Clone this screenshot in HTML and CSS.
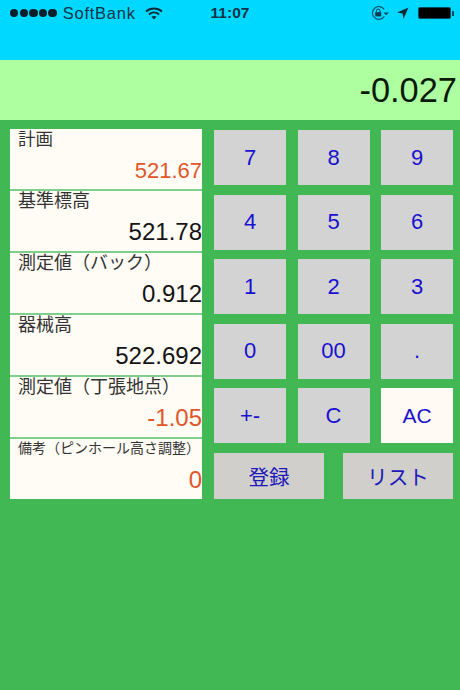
FILE: index.html
```html
<!DOCTYPE html>
<html lang="ja">
<head>
<meta charset="utf-8">
<title>Calculator</title>
<link rel="stylesheet" href="styles.css">
</head>
<body>
<header class="top">
  <div class="status">
    <div class="status-left">
      <span class="dots"><i></i><i></i><i></i><i></i><i></i></span>
      <span class="carrier">SoftBank</span>
      <svg class="wifi" width="18" height="13" viewBox="0 0 18 13"><path d="M1 4.6C5.6.6 12.4.6 17 4.6" fill="none" stroke="#0a2a3a" stroke-width="2"/><path d="M3.9 7.4c3-2.5 7.2-2.5 10.2 0" fill="none" stroke="#0a2a3a" stroke-width="2"/><path d="M9 12.6 6.4 9.8c1.5-1.1 3.7-1.1 5.2 0z" fill="#0a2a3a"/></svg>
    </div>
    <span class="time">11:07</span>
    <div class="status-right">
      <svg width="18" height="14" viewBox="0 0 18 14"><path d="M13.4 10.2A6.4 6.4 0 1 1 13.2 3.4" fill="none" stroke="#0a4a60" stroke-width="1.1"/><path d="M12.4 6.4H18l-2.8 2.8z" fill="#0a4a60"/><rect x="4.2" y="6.2" width="6" height="4.2" fill="#0a3a50"/><path d="M5.4 6.2V4.9a1.8 1.8 0 0 1 3.6 0v1.3" fill="none" stroke="#0a3a50"/></svg>
      <svg class="arrow" width="12" height="12" viewBox="0 0 12 12"><path d="M11.5.5 0 5.5l5.6.9.9 5.6z" fill="#0a2a3a"/></svg>
      <span class="battery"><span class="fill"></span></span>
    </div>
  </div>
</header>
<div class="display">-0.027</div>
<main class="main">
  <section class="fields">
    <div class="field"><div class="label l1">計画</div><div class="value alert first">521.67</div></div>
    <div class="field"><div class="label">基準標高</div><div class="value">521.78</div></div>
    <div class="field"><div class="label">測定値（バック）</div><div class="value">0.912</div></div>
    <div class="field"><div class="label">器械高</div><div class="value">522.692</div></div>
    <div class="field"><div class="label">測定値（丁張地点）</div><div class="value alert">-1.05</div></div>
    <div class="field"><div class="label small">備考（ピンホール高さ調整）</div><div class="value alert">0</div></div>
  </section>
  <section class="pad">
    <div class="keys">
      <div class="key">7</div><div class="key">8</div><div class="key">9</div>
      <div class="key">4</div><div class="key">5</div><div class="key">6</div>
      <div class="key">1</div><div class="key">2</div><div class="key">3</div>
      <div class="key">0</div><div class="key">00</div><div class="key">.</div>
      <div class="key">+-</div><div class="key">C</div><div class="key on">AC</div>
    </div>
    <div class="actions">
      <div class="key wide">登録</div>
      <div class="key wide">リスト</div>
    </div>
  </section>
</main>
</body>
</html>
```
FILE: styles.css
```css
html, body {
  margin: 0;
  height: 100%;
}
body {
  width: 460px;
  height: 690px;
  overflow: hidden;
  background: #41b853;
  font-family: "Liberation Sans", "Noto Sans CJK JP", sans-serif;
  display: flex;
  flex-direction: column;
}
.top {
  height: 60px;
  background: #00d8ff;
  box-sizing: border-box;
  padding-top: 3px;
}
.status {
  height: 20px;
  padding: 0 7px 0 10px;
  display: grid;
  grid-template-columns: 1fr auto 1fr;
  align-items: center;
  color: #0a3346;
  font-size: 16.5px;
}
.status-left, .status-right {
  display: flex;
  align-items: center;
}
.status-right {
  justify-content: flex-end;
  gap: 9px;
}
.dots {
  display: flex;
  gap: 1.2px;
  margin-right: 6px;
}
.dots i {
  width: 8.4px;
  height: 8.4px;
  border-radius: 50%;
  background: #08202c;
}
.carrier {
  letter-spacing: 0.75px;
}
.wifi {
  margin-left: 9px;
}
.time {
  font-weight: bold;
  font-size: 15.5px;
  margin-right: 3px;
}
.arrow {
  margin-left: -1px;
}
.battery {
  width: 33px;
  height: 12px;
  background: #0a4a60;
  border-radius: 2px;
  padding: 1px;
  box-sizing: border-box;
  display: block;
  margin-right: 2px;
  position: relative;
}
.battery::after {
  content: "";
  position: absolute;
  right: -3px;
  top: 3.5px;
  width: 2px;
  height: 5px;
  background: #0a4a60;
}
.fill {
  display: block;
  height: 100%;
  background: #000;
  border-radius: 1px;
}
.display {
  height: 60px;
  background: #adff9f;
  color: #0a1a0a;
  font-size: 34.4px;
  line-height: 60px;
  text-align: right;
  padding-right: 3px;
}
.main {
  display: flex;
  padding: 9px 7px 0 10px;
  gap: 12px;
}
.fields {
  width: 192px;
  display: flex;
  flex-direction: column;
  gap: 2px;
  background: #7fcf8c;
  height: 370px;
}
.field {
  flex: 1;
  background: #fffbf5;
  display: flex;
  flex-direction: column;
  justify-content: space-between;
  padding: 0 0 6px 8px;
}
.label {
  color: #333;
  font-size: 18px;
  line-height: 20px;
}
.l1 {
  font-size: 17.5px;
}
.small {
  font-size: 14px;
  white-space: nowrap;
  line-height: 18px;
}
.value {
  color: #141414;
  font-size: 24px;
  line-height: 26px;
  text-align: right;
}
.first {
  font-size: 22px;
  margin-bottom: -1px;
}
.alert {
  color: #e0562a;
}
.pad {
  flex: 1;
  display: flex;
  flex-direction: column;
  padding-top: 1px;
  gap: 10px;
}
.keys {
  display: grid;
  grid-template-columns: repeat(3, 72px);
  grid-auto-rows: 55px;
  column-gap: 11.5px;
  row-gap: 9.5px;
}
.key {
  background: #d3d3d3;
  color: #1a10d0;
  font-size: 22px;
  display: flex;
  align-items: center;
  justify-content: center;
}
.on {
  background: #fffaf3;
  font-size: 21px;
}
.actions {
  display: flex;
  justify-content: space-between;
}
.wide {
  width: 110px;
  height: 46px;
  font-size: 20.6px;
  background: #d0cfcc;
  color: #2018b8;
}
```
